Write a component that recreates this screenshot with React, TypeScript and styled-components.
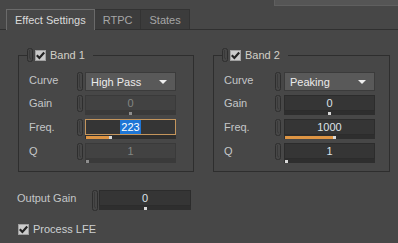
import React from 'react';
import styled, { createGlobalStyle } from 'styled-components';

const GlobalStyle = createGlobalStyle`
  *, *::before, *::after { box-sizing: border-box; }
  html, body { margin: 0; padding: 0; background: #474747; }
  body { font-family: "Liberation Sans", Arial, sans-serif; font-size: 11px; }
`;

const Page = styled.div`
  width: 398px;
  height: 243px;
  overflow: hidden;
  background: #474747;
  color: #c8c8c8;
`;

const TopStrip = styled.div`
  height: 9px;
  display: flex;
  justify-content: flex-end;
`;

const StripPanel = styled.div`
  width: 124px;
  height: 6px;
  background: #555555;
  border-left: 1px solid #5f5f5f;
  border-bottom: 1px solid #5f5f5f;
`;

const TabBar = styled.div`
  height: 21px;
  display: flex;
  padding-left: 6px;
  border-bottom: 1px solid #303030;
`;

const Tab = styled.div<{ $active?: boolean }>`
  height: ${(p) => (p.$active ? 21 : 20)}px;
  padding: 0 8px;
  display: flex;
  align-items: center;
  background: ${(p) => (p.$active ? '#474747' : '#3c3c3c')};
  color: ${(p) => (p.$active ? '#dadada' : '#a6a6a6')};
  border: 1px solid ${(p) => (p.$active ? '#6a6a6a' : '#333333')};
  border-bottom: none;
  border-left: ${(p) => (p.$active ? '1px solid #6a6a6a' : 'none')};
`;

const Content = styled.div`
  padding: 18px 0 0 17px;
`;

const Bands = styled.div`
  display: flex;
  gap: 19px;
  margin-left: 1px;
`;

const Group = styled.fieldset<{ $width: number }>`
  margin: 0;
  padding: 10px 0 8px 0;
  width: ${(p) => p.$width}px;
  min-width: 0;
  border: 1px solid #2e2e2e;
`;

const Legend = styled.legend`
  margin-left: 8px;
  padding: 0 8px 0 0;
  height: 14px;
  display: flex;
  align-items: center;
  color: #d2d0c8;
`;

const Rows = styled.div<{ $labelWidth: number; $pinWidth: number }>`
  display: grid;
  grid-template-columns: ${(p) => p.$labelWidth}px ${(p) => p.$pinWidth}px 91px;
  row-gap: 4px;
  padding-left: 10px;
  align-items: start;
`;

const Label = styled.div`
  line-height: 16px;
  color: #c4c6c8;
  white-space: nowrap;
`;

const PinWrap = styled.div`
  display: flex;
  height: 100%;
`;

const Select = styled.div`
  height: 19px;
  display: flex;
  align-items: center;
  justify-content: space-between;
  padding: 0 8px 0 5px;
  background: #595959;
  border: 1px solid #3b3b3b;
  color: #ececec;
`;

const Caret = styled.span`
  width: 0;
  height: 0;
  border-left: 4px solid transparent;
  border-right: 4px solid transparent;
  border-top: 4px solid #eeeeee;
`;

const SliderBox = styled.div<{ $width: number }>`
  width: ${(p) => p.$width}px;
  height: 20px;
  display: flex;
  flex-direction: column;
`;

const ValueBox = styled.div<{ $disabled?: boolean; $focused?: boolean }>`
  height: 16px;
  display: flex;
  align-items: center;
  justify-content: center;
  background: ${(p) => (p.$disabled ? '#424242' : '#353535')};
  border: 1px solid ${(p) => (p.$focused ? '#c4955c' : p.$disabled ? '#3a3a3a' : '#2c2c2c')};
  color: ${(p) => (p.$disabled ? '#828682' : '#dde3e8')};
  line-height: 14px;
`;

const Selected = styled.span`
  background: #1e76d6;
  color: #ffffff;
  padding: 0 1px;
`;

const Track = styled.div<{ $disabled?: boolean }>`
  position: relative;
  height: 4px;
  background: ${(p) => (p.$disabled ? '#3a3a3a' : '#2e2e2e')};
`;

const Fill = styled.div`
  position: absolute;
  left: 1px;
  top: 1px;
  height: 3px;
  background: #de9544;
`;

const Thumb = styled.div<{ $disabled?: boolean }>`
  position: absolute;
  top: 1px;
  width: 3px;
  height: 3px;
  background: ${(p) => (p.$disabled ? '#8e8e8e' : '#d8d8d8')};
`;

const Bottom = styled.div`
  margin-top: 18px;
  display: flex;
  flex-direction: column;
  gap: 12px;
`;

const OutputRow = styled.div`
  display: grid;
  grid-template-columns: 75px 7px 92px;
  align-items: start;
`;

const CheckRow = styled.div`
  display: flex;
  align-items: center;
  gap: 0;
  margin-left: 1px;
  color: #cdd0d2;
`;

const CheckSquare = styled.span`
  width: 11px;
  height: 11px;
  display: inline-flex;
  align-items: center;
  justify-content: center;
  background: #cbcbcb;
  border: 1px solid #a0a0a0;
  margin-right: 4px;
`;

const Pin = ({ h }: { h: number }) => (
  <svg width="6" height={h} viewBox={`0 0 6 ${h}`}>
    <rect x="0.5" y="0.5" width="5" height={h - 1} rx="2" fill="none" stroke="#2e2e2e" />
    <path d={`M2.5 2 V${h - 5} Q2.5 ${h - 3} 4 ${h - 3}`} fill="none" stroke="#3a3a3a" />
  </svg>
);

const Check = () => (
  <CheckSquare>
    <svg width="9" height="9" viewBox="0 0 9 9">
      <path d="M0.8 4.3 L3.4 7 L8.2 1.6" fill="none" stroke="#232323" strokeWidth="2.2" />
    </svg>
  </CheckSquare>
);

type SliderProps = {
  value: string;
  pct: number;
  width?: number;
  disabled?: boolean;
  focused?: boolean;
  fill?: boolean;
};

const Slider = ({ value, pct, width = 91, disabled, focused, fill }: SliderProps) => {
  const pos = Math.round(pct * (width - 5)) + 1;
  return (
    <SliderBox $width={width}>
      <ValueBox $disabled={disabled} $focused={focused}>
        {focused ? <Selected>{value}</Selected> : value}
      </ValueBox>
      <Track $disabled={disabled}>
        {fill && <Fill style={{ width: pos - 1 }} />}
        <Thumb $disabled={disabled} style={{ left: pos }} />
      </Track>
    </SliderBox>
  );
};

type BandProps = {
  title: string;
  width: number;
  labelWidth: number;
  pinWidth: number;
  curve: string;
  disabledGain: boolean;
  freq: string;
  freqPct: number;
  focused?: boolean;
};

const Band = ({ title, width, labelWidth, pinWidth, curve, disabledGain, freq, freqPct, focused }: BandProps) => (
  <Group $width={width}>
    <Legend>
      <PinWrap style={{ marginRight: 2 }}>
        <Pin h={14} />
      </PinWrap>
      <Check />
      {title}
    </Legend>
    <Rows $labelWidth={labelWidth} $pinWidth={pinWidth}>
      <Label>Curve</Label>
      <PinWrap>
        <Pin h={19} />
      </PinWrap>
      <Select>
        {curve}
        <Caret />
      </Select>

      <Label>Gain</Label>
      <PinWrap>
        <Pin h={17} />
      </PinWrap>
      <Slider value="0" pct={0.5} disabled={disabledGain} />

      <Label>Freq.</Label>
      <PinWrap>
        <Pin h={17} />
      </PinWrap>
      <Slider value={freq} pct={freqPct} focused={focused} fill />

      <Label>Q</Label>
      <PinWrap>
        <Pin h={17} />
      </PinWrap>
      <Slider value="1" pct={0} disabled={disabledGain} fill={!disabledGain} />
    </Rows>
  </Group>
);

export default function App() {
  return (
    <Page>
      <GlobalStyle />
      <TopStrip>
        <StripPanel />
      </TopStrip>
      <TabBar>
        <Tab $active>Effect Settings</Tab>
        <Tab>RTPC</Tab>
        <Tab>States</Tab>
      </TabBar>
      <Content>
        <Bands>
          <Band
            title="Band 1"
            width={176}
            labelWidth={48}
            pinWidth={8}
            curve="High Pass"
            disabledGain
            freq="223"
            freqPct={0.27}
            focused
          />
          <Band
            title="Band 2"
            width={177}
            labelWidth={51}
            pinWidth={9}
            curve="Peaking"
            disabledGain={false}
            freq="1000"
            freqPct={0.56}
          />
        </Bands>
        <Bottom>
          <OutputRow>
            <Label>Output Gain</Label>
            <PinWrap>
              <Pin h={21} />
            </PinWrap>
            <Slider value="0" pct={0.5} width={92} />
          </OutputRow>
          <CheckRow>
            <Check />
            Process LFE
          </CheckRow>
        </Bottom>
      </Content>
    </Page>
  );
}
